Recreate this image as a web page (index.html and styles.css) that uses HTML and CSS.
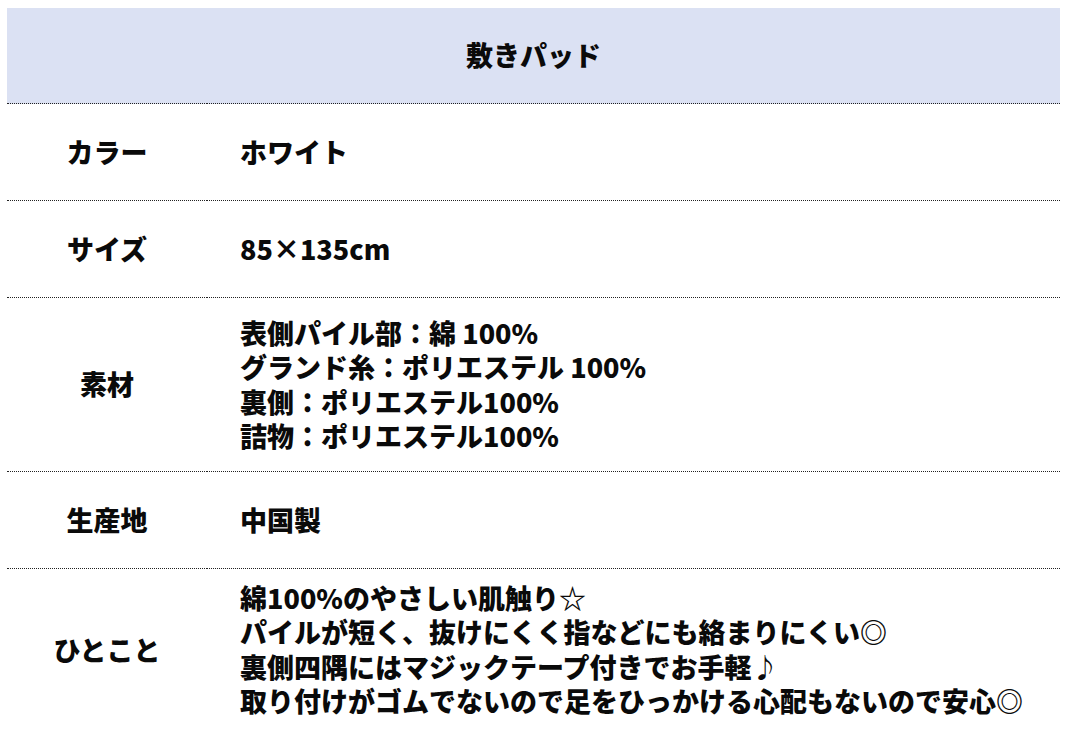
FILE: index.html
```html
<!DOCTYPE html>
<html lang="ja">
<head>
<meta charset="utf-8">
<title>敷きパッド</title>
<link rel="stylesheet" href="styles.css">
</head>
<body>
<table class="spec">
  <colgroup><col class="col-label"><col class="col-value"></colgroup>
  <thead>
    <tr><th colspan="2" class="title">敷きパッド</th></tr>
  </thead>
  <tbody>
    <tr class="row-s"><th class="label">カラー</th><td class="value">ホワイト</td></tr>
    <tr class="row-s"><th class="label">サイズ</th><td class="value">85×135cm</td></tr>
    <tr class="row-m"><th class="label">素材</th><td class="value">表側パイル部：綿 100%<br>グランド糸：ポリエステル 100%<br>裏側：ポリエステル100%<br>詰物：ポリエステル100%</td></tr>
    <tr class="row-s"><th class="label">生産地</th><td class="value">中国製</td></tr>
    <tr class="row-m last"><th class="label">ひとこと</th><td class="value">綿100%のやさしい肌触り☆<br>パイルが短く、抜けにくく指などにも絡まりにくい◎<br>裏側四隅にはマジックテープ付きでお手軽♪<br>取り付けがゴムでないので足をひっかける心配もないので安心◎</td></tr>
  </tbody>
</table>
</body>
</html>
```

FILE: styles.css
```css
html, body {
  margin: 0;
  padding: 0;
  background: #ffffff;
}
body {
  padding: 8px 5px 0 7px;
  font-family: "Noto Sans CJK JP", "Noto Sans", sans-serif;
  color: #0a0a0a;
}
.spec {
  width: 1053px;
  border-collapse: collapse;
  table-layout: fixed;
}
.col-label {
  width: 200px;
}
.spec th, .spec td {
  padding: 0;
  font-weight: 900;
  font-size: 27px;
  line-height: 34.3px;
  vertical-align: middle;
  white-space: nowrap;
  border-bottom: 1px dotted #222222;
}
.title {
  height: 95px;
  background: #dbe1f3;
  text-align: center;
  border-bottom: 1px dotted #000000;
}
.label {
  text-align: center;
}
.value {
  text-align: left;
  padding-left: 33px !important;
}
.row-s th, .row-s td {
  height: 96px;
}
.row-m th, .row-m td {
  padding-top: 18px !important;
  padding-bottom: 18px !important;
}
.last th, .last td {
  padding-top: 12px !important;
}
```
